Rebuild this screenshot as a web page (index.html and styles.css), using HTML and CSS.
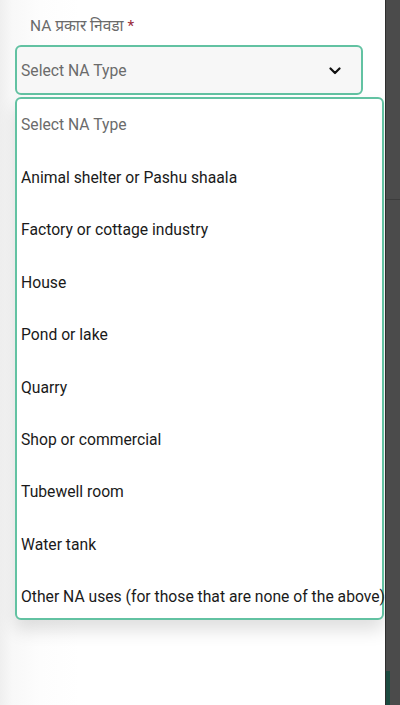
FILE: index.html
```html
<!DOCTYPE html>
<html lang="en">
<head>
<meta charset="utf-8">
<title>NA Type</title>
<link rel="stylesheet" href="styles.css">
</head>
<body>
<div class="screen">
  <main class="form">
    <label class="label">NA प्रकार निवडा <span class="req">*</span></label>
    <div class="select">
      <span class="placeholder">Select NA Type</span>
      <svg class="chev" width="12" height="8" viewBox="0 0 12 8"><path d="M1.5 1.5 L6 6 L10.5 1.5" fill="none" stroke="#111" stroke-width="2.2" stroke-linecap="round" stroke-linejoin="round"/></svg>
    </div>
    <ul class="menu">
      <li class="opt muted">Select NA Type</li>
      <li class="opt">Animal shelter or Pashu shaala</li>
      <li class="opt">Factory or cottage industry</li>
      <li class="opt">House</li>
      <li class="opt">Pond or lake</li>
      <li class="opt">Quarry</li>
      <li class="opt">Shop or commercial</li>
      <li class="opt">Tubewell room</li>
      <li class="opt">Water tank</li>
      <li class="opt">Other NA uses (for those that are none of the above)</li>
    </ul>
  </main>
  <aside class="edge"><div class="edge-line"></div><div class="edge-teal"></div></aside>
</div>
</body>
</html>
```
FILE: styles.css
```css
* { box-sizing: border-box; }
html, body { margin: 0; padding: 0; }
body {
  width: 400px;
  height: 705px;
  overflow: hidden;
  font-family: Roboto, "Noto Sans", "Noto Sans Devanagari", sans-serif;
  background: #fff;
}
.screen {
  display: flex;
  height: 705px;
}
.form {
  flex: 1;
  display: flex;
  flex-direction: column;
  background: linear-gradient(to right, #efefef 0, #f8f8f8 12px, #fdfdfd 40px, #fff 80px);
  padding-top: 16px;
}
.label {
  padding-left: 30px;
  font-size: 15.5px;
  line-height: 20px;
  color: #6a6a6a;
  height: 29px;
}
.req { color: #9a2a3a; }
.select {
  margin-left: 15px;
  width: 348px;
  height: 50px;
  border: 2px solid #62c2a2;
  border-radius: 6px;
  background: #f7f7f7;
  display: flex;
  align-items: center;
  justify-content: space-between;
  padding: 1px 20px 0 4px;
}
.placeholder {
  font-size: 15.7px;
  color: #6b6b6b;
}
.chev { display: block; }
.menu {
  list-style: none;
  margin: 2px 0 0 15px;
  padding: 0;
  width: 369px;
  border: 2px solid #62c2a2;
  border-radius: 6px;
  background: #fff;
  box-shadow: 0 10px 18px rgba(0,0,0,0.13);
}
.opt {
  height: 52.4px;
  display: flex;
  align-items: center;
  padding-left: 4px;
  font-size: 15.7px;
  color: #1a1a1a;
  white-space: nowrap;
}
.opt:first-child { padding-bottom: 2px; }
.opt:last-child { height: 47px; padding-top: 4px; }
.opt.muted { color: #6b6b6b; }
.edge {
  width: 15px;
  background: #4b4b4b;
  border-left: 1px solid #2e2e2e;
  display: flex;
  flex-direction: column;
  justify-content: space-between;
}
.edge-line {
  height: 200px;
  border-bottom: 1px solid #3c3c3c;
}
.edge-teal {
  width: 4px;
  height: 34px;
  background: #1c4a40;
}
```
